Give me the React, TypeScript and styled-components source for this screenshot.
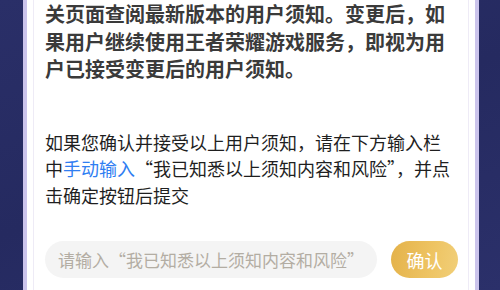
import React, { useState } from 'react';
import styled, { createGlobalStyle } from 'styled-components';

const GlobalStyle = createGlobalStyle`
  html, body {
    margin: 0;
    padding: 0;
    width: 500px;
    height: 290px;
    overflow: hidden;
    background: #262b62;
  }
  * { box-sizing: border-box; }
`;

const Frame = styled.div`
  display: flex;
  width: 500px;
  height: 290px;
  padding: 0 24px 0 23px;
  background: linear-gradient(160deg, #2a2f68 0%, #252a60 50%, #2b306a 100%);
`;

const Panel = styled.div`
  flex: 1;
  display: flex;
  background: #fff;
  border-left: 4px solid #cbc4ec;
  border-right: 4px solid #cbc4ec;
  padding: 0 6px;
`;

const Inner = styled.div`
  flex: 1;
  display: flex;
  flex-direction: column;
  border-left: 1px solid #eeebf6;
  border-right: 1px solid #eeebf6;
  padding: 0 10px 0 11px;
  font-family: "Noto Sans CJK SC", "Noto Sans", sans-serif;
`;

const Notice = styled.p`
  margin: 0;
  font-size: 20px;
  line-height: 27.5px;
  font-weight: 700;
  color: #3a3a3a;
`;

const Confirm = styled.p`
  margin: 46px 0 0;
  font-size: 18px;
  line-height: 26.5px;
  color: #1f1f1f;
`;

const Link = styled.span`
  color: #2f7ef2;
`;

const InputRow = styled.div`
  display: flex;
  align-items: center;
  gap: 14px;
  margin-top: 33px;
`;

const Field = styled.input`
  width: 332px;
  height: 37px;
  border: none;
  outline: none;
  border-radius: 19px;
  background: #f4f4f4;
  padding: 0 0 0 13px;
  font-family: inherit;
  font-size: 17px;
  color: #333;
  &::placeholder {
    color: #b3ada3;
  }
`;

const Button = styled.button`
  width: 67px;
  height: 37px;
  border: none;
  border-radius: 19px;
  background: linear-gradient(100deg, #e4b24a 0%, #eec463 60%, #f1cf79 100%);
  color: #fff;
  font-family: inherit;
  font-size: 18px;
  padding: 0;
  cursor: pointer;
`;

export default function App() {
  const [text, setText] = useState('');

  return (
    <>
      <GlobalStyle />
      <Frame>
        <Panel>
          <Inner>
            <Notice>
              关页面查阅最新版本的用户须知。变更后，如果用户继续使用王者荣耀游戏服务，即视为用户已接受变更后的用户须知。
            </Notice>
            <Confirm>
              如果您确认并接受以上用户须知，请在下方输入栏中<Link>手动输入</Link>“我已知悉以上须知内容和风险”，并点击确定按钮后提交
            </Confirm>
            <InputRow>
              <Field
                value={text}
                onChange={(e) => setText(e.target.value)}
                placeholder="请输入“我已知悉以上须知内容和风险”"
              />
              <Button>确认</Button>
            </InputRow>
          </Inner>
        </Panel>
      </Frame>
    </>
  );
}
